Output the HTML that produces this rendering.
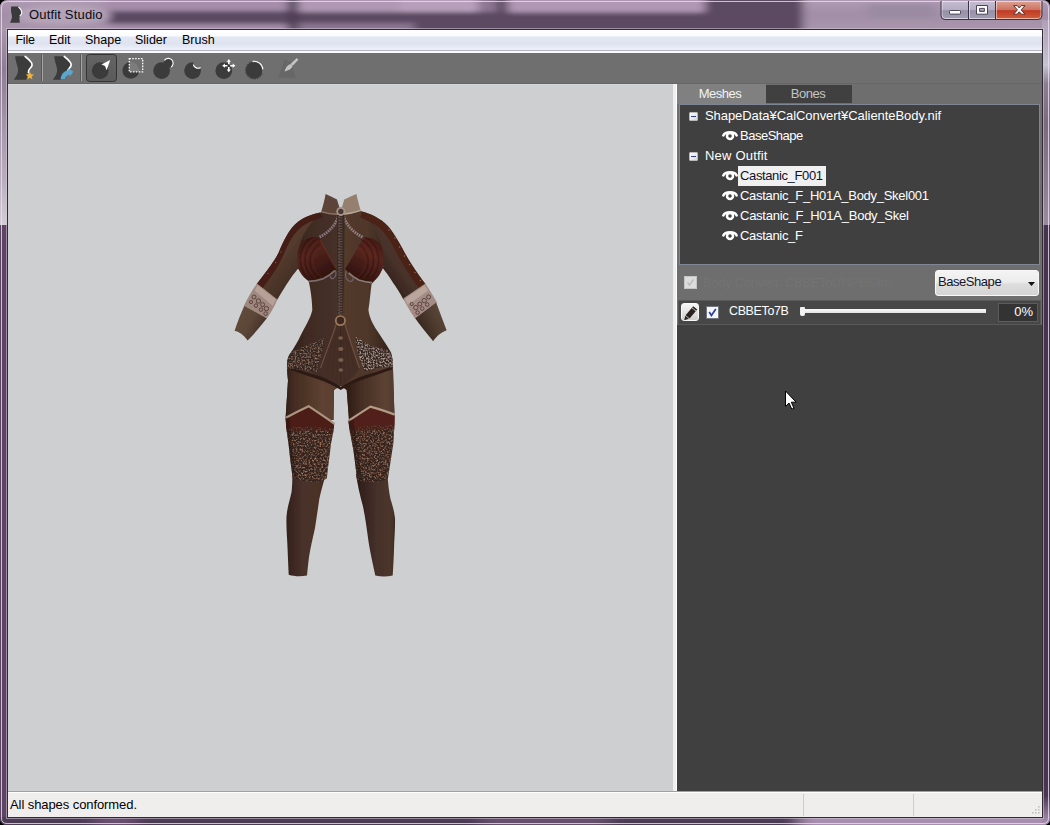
<!DOCTYPE html>
<html><head><meta charset="utf-8">
<style>
*{margin:0;padding:0;box-sizing:border-box}
html,body{width:1050px;height:825px;overflow:hidden;background:#000;font-family:"Liberation Sans",sans-serif;font-size:12px;color:#000}
.abs{position:absolute}
#win{position:absolute;left:0;top:0;width:1050px;height:825px;background:#000;overflow:hidden}
#glass{position:absolute;left:0;top:0;width:1050px;height:825px}
#client{position:absolute;left:8px;top:30px;width:1034px;height:787px;background:#6e6e6e}
#menubar{position:absolute;left:0;top:0;width:1034px;height:20px;background:linear-gradient(#fff 0,#fbfbfe 6px,#e3e7f3 7px,#dfe3f0 14px,#eceff8 19px)}
#menubar span{position:absolute;top:3px;font-size:12.5px;color:#000;white-space:nowrap}
#menuline{position:absolute;left:0;top:20px;width:1034px;height:1px;background:#b4b6c0}
#menuline2{position:absolute;left:0;top:21px;width:1034px;height:2px;background:#fafafa}
#toolbar{position:absolute;left:0;top:23px;width:1034px;height:31px;background:#6f6f6f;box-shadow:inset 0 -1px 0 #666}
#canvas{position:absolute;left:0;top:54px;width:665px;height:707px;background:#cecfd1;box-shadow:inset 0 1px 0 #d5d6d8}
#sash{position:absolute;left:665px;top:54px;width:4px;height:707px;background:linear-gradient(90deg,#ececec 0,#f0f0f0 25%,#f0f0f0 74%,#fff 76%)}
#panel{position:absolute;left:669px;top:54px;width:365px;height:707px;background:#6e6e6e}
#status{position:absolute;left:0;top:761px;width:1034px;height:26px;background:#f0eeed;border-top:1px solid #a0a0a0;box-shadow:inset 0 1px 0 #fff}

#panel .tab{position:absolute;font-size:13px;letter-spacing:-0.5px;text-align:center;white-space:nowrap}
#tree{position:absolute;left:2px;top:20px;width:361px;height:161px;background:#404040;border:1px solid #7f8796}
.trow{position:absolute;left:0;height:20px;line-height:22px;font-size:13px;color:#fff;white-space:nowrap;letter-spacing:-0.3px}
.exp{position:absolute;left:9px;margin-top:-1px;width:9px;height:9px;background:linear-gradient(135deg,#fff,#d8d8d8);border:1px solid #b8b8b8;border-radius:1px}
.exp i{position:absolute;left:1px;top:3px;width:5px;height:1px;background:#2a3ea0}
.eye{position:absolute;left:42px;width:16px;height:12px}
#darkarea{position:absolute;left:0;top:241px;width:365px;height:466px;background:#404040}
#srow{position:absolute;left:1px;top:216px;width:363px;height:25px;background:#474747;border:1px solid #595959}
#combo{position:absolute;left:258px;top:186px;width:104px;height:26px;border-radius:3px;background:linear-gradient(#f4f4f4 0,#ececec 45%,#dddddd 55%,#d4d4d4 100%);border:1px solid #f8f8f8}
</style></head>
<body>
<div id="win">
<svg id="glass" width="1050" height="825" viewBox="0 0 1050 825">
<defs>
<clipPath id="wclip"><path d="M0 8 Q0 0 8 0 H1042 Q1050 0 1050 8 V818 Q1050 825 1043 825 H7 Q0 825 0 818 Z"/></clipPath>
<filter id="b3" x="-5%" y="-50%" width="110%" height="200%"><feGaussianBlur stdDeviation="5 1.9"/></filter>
<filter id="b2" x="-5%" y="-100%" width="110%" height="300%"><feGaussianBlur stdDeviation="9 0.6"/></filter>
<linearGradient id="gL" x1="0" y1="0" x2="0" y2="1"><stop offset="0" stop-color="#a896ac"/><stop offset="0.2" stop-color="#8e7c94"/><stop offset="0.45" stop-color="#a292a6"/><stop offset="0.75" stop-color="#b8acbc"/><stop offset="1" stop-color="#d4ccd8"/></linearGradient>
<linearGradient id="gR" x1="0" y1="0" x2="0" y2="1"><stop offset="0" stop-color="#b0a0b6"/><stop offset="0.12" stop-color="#b8b0c4"/><stop offset="0.22" stop-color="#c4c4d2"/><stop offset="0.31" stop-color="#8c7e92"/><stop offset="0.5" stop-color="#7a6a80"/><stop offset="1" stop-color="#9a8aa0"/></linearGradient>
<linearGradient id="gRB" x1="0" y1="0" x2="0" y2="1"><stop offset="0" stop-color="#46344c"/><stop offset="0.35" stop-color="#4a3850"/><stop offset="0.85" stop-color="#9a82a2"/><stop offset="1" stop-color="#a88fb0"/></linearGradient><linearGradient id="gTl" x1="0" y1="0" x2="0" y2="1"><stop offset="0" stop-color="#b39fb7"/><stop offset="0.45" stop-color="#a28ea6"/><stop offset="1" stop-color="#ab98af"/></linearGradient>
<linearGradient id="gTd" x1="0" y1="0" x2="0" y2="1"><stop offset="0" stop-color="#ac94b0"/><stop offset="0.3" stop-color="#a48ca8"/><stop offset="0.42" stop-color="#634e68"/><stop offset="0.72" stop-color="#5a4660"/><stop offset="0.84" stop-color="#75617b"/><stop offset="1" stop-color="#8e7a94"/></linearGradient>
<linearGradient id="gBtn" x1="0" y1="0" x2="0" y2="1"><stop offset="0" stop-color="#c6bdd0"/><stop offset="0.48" stop-color="#b4acc2"/><stop offset="0.52" stop-color="#9690a8"/><stop offset="1" stop-color="#a49eb4"/></linearGradient>
<linearGradient id="gCl" x1="0" y1="0" x2="0" y2="1"><stop offset="0" stop-color="#dea291"/><stop offset="0.48" stop-color="#cc7260"/><stop offset="0.52" stop-color="#bf3a24"/><stop offset="1" stop-color="#d4603f"/></linearGradient>
</defs>
<rect width="1050" height="825" fill="#000"/>
<g clip-path="url(#wclip)">
 <rect width="1050" height="825" fill="#5a4260"/>
 <!-- title bar -->
 <g filter="url(#b3)">
  <rect x="-10" y="-4" width="125" height="40" fill="url(#gTl)"/>
  <rect x="108" y="-4" width="700" height="40" fill="#5c4862"/>
  <rect x="104" y="-4" width="188" height="15" fill="#a68eaa"/>
  <rect x="104" y="24" width="188" height="10" fill="#a68eaa"/>
  <rect x="298" y="-4" width="200" height="16" fill="#b098b4"/>
  <rect x="400" y="-4" width="78" height="16" fill="#b8a0bc"/>
  <rect x="478" y="-4" width="20" height="16" fill="#8c7692"/>
  <rect x="298" y="23" width="116" height="12" fill="#8a7490"/>
  <rect x="508" y="-4" width="197" height="16.5" fill="#b098b4"/>
  <rect x="288" y="-4" width="10" height="40" fill="#4c3c52"/>
  <rect x="497" y="-4" width="10" height="18" fill="#5a4660"/>
  <rect x="705" y="-4" width="100" height="40" fill="#5c4a62"/>
  <rect x="803" y="-4" width="260" height="40" fill="url(#gTl)"/>
  <rect x="868" y="4" width="66" height="14" fill="#9a8aa2"/>
 </g>
 <ellipse cx="62" cy="15" rx="50" ry="10" fill="#c4b5c7" opacity="0.5" filter="url(#b3)"/>
 <!-- side borders -->
 <rect x="0" y="30" width="8" height="195" fill="url(#gL)"/>
 <rect x="0" y="225" width="8" height="600" fill="#5e4564"/>
 <rect x="1042" y="20" width="8" height="205" fill="url(#gR)"/>
 <rect x="1042" y="225" width="8" height="600" fill="#46344c"/>
 <!-- bottom border -->
 <g filter="url(#b2)">
 <rect x="-5" y="817" width="815" height="12" fill="#4c3a52"/>
 <rect x="95" y="817" width="40" height="12" fill="#6a5070"/>
 <rect x="480" y="817" width="130" height="12" fill="#65506b"/>
 <rect x="800" y="817" width="260" height="12" fill="#a88fb0"/>
 </g>
 <rect x="1042" y="790" width="8" height="30" fill="#46344c"/>
 <rect x="1042" y="780" width="8" height="45" fill="url(#gRB)"/>
 <!-- inner frame lines around client -->
 <rect x="6.5" y="28.5" width="1037" height="790" fill="none" stroke="#d5c8da" stroke-opacity="0.55" stroke-width="1"/>
 <rect x="7.5" y="29.5" width="1035" height="788" fill="none" stroke="#332a36" stroke-width="1"/>
 <!-- outer highlight -->
 <path d="M1.5 8 Q1.5 1.5 8 1.5 H1042 Q1048.5 1.5 1048.5 8 V818 Q1048.5 823.5 1043 823.5 H7 Q1.5 823.5 1.5 818 Z" fill="none" stroke="#eadff0" stroke-opacity="0.8" stroke-width="1"/>
 <!-- caption buttons -->
 <path d="M941 1 H1042 V15.5 Q1042 19.5 1038 19.5 H945 Q941 19.5 941 15.5 Z" fill="url(#gBtn)"/>
 <path d="M995.5 1 H1042 V15.5 Q1042 19.5 1038 19.5 H995.5 Z" fill="url(#gCl)"/>
 <path d="M942 1.5 H1041 V15.5 Q1041 18.5 1038 18.5 H945 Q942 18.5 942 15.5 Z" fill="none" stroke="#fff" stroke-opacity="0.55"/>
 <path d="M941 1 V15.5 Q941 19.5 945 19.5 H1038 Q1042 19.5 1042 15.5 V1" fill="none" stroke="#3a3446" stroke-width="1"/>
 <path d="M968.5 1 V19 M995.5 1 V19" stroke="#3a3446" stroke-width="1"/>
 <path d="M969.5 2 V18 M996.5 2 V18" stroke="#fff" stroke-opacity="0.5" stroke-width="1"/>
 <rect x="949.5" y="10.5" width="11" height="3.6" rx="0.8" fill="#fdfdfd" stroke="#4a4658" stroke-width="1"/>
 <path d="M976.5 5.5 H987.5 V14.2 H976.5 Z M979.6 8.4 V11.4 H984.4 V8.4 Z" fill="#fdfdfd" fill-rule="evenodd" stroke="#4a4658" stroke-width="1"/>
 <path d="M1013.6 5.6 H1017.2 L1019.3 8 L1021.4 5.6 H1025 L1021.2 9.9 L1025 14.2 H1021.4 L1019.3 11.8 L1017.2 14.2 H1013.6 L1017.4 9.9 Z" fill="#fdfdfd" stroke="#5a3030" stroke-width="1" stroke-linejoin="round"/>
</g>
</svg>
<svg class="abs" style="left:8px;top:6px" width="16" height="18" viewBox="0 0 16 18"><path d="M3.2 0.6 H10.6 C12.6 2.6 14 4.4 14 6.4 C14 8.4 12.4 9.4 11.6 10.6 C11.2 11.8 11.6 13.6 11.8 16.8 H2 C3.6 13.6 4.2 11.6 3.8 9.6 C3.4 7.2 2.6 4 3.2 0.6 Z" fill="#3a3a3c"/><path d="M10.4 0.8 C12.4 2.6 13.8 4.4 13.8 6.4 C13.8 8.2 12.6 9 11.8 10" fill="none" stroke="#fff" stroke-width="1.1"/></svg>
<div class="abs" style="left:29px;top:7px;font-size:13px;letter-spacing:0.17px;color:#0a0a14;white-space:nowrap">Outfit Studio</div>
<div id="client">
  <div id="menubar"><span style="left:7.4px;letter-spacing:-0.2px">File</span><span style="left:41px">Edit</span><span style="left:77px">Shape</span><span style="left:127px">Slider</span><span style="left:174px">Brush</span></div>
  <div id="menuline"></div><div id="menuline2"></div>
  <div id="toolbar"><svg class="abs" style="left:0;top:0" width="330" height="31" viewBox="8 53 330 31">
<defs><linearGradient id="selg" x1="0" y1="0" x2="0" y2="1"><stop offset="0" stop-color="#646464"/><stop offset="1" stop-color="#5a5a5a"/></linearGradient></defs>
<path d="M15.2 56.2 H25.1 C27.2 58 29.6 59.8 31.4 62.6 C32.8 64.8 32 66.6 29.9 68.5 C28.6 69.6 28.3 70.6 28.4 72.6 L26.2 79.8 H13.8 C16 76.6 17.4 74.6 17.9 72 C18.5 68.6 17 65.4 16.2 62.2 C15.7 60.2 15.3 58.4 15.2 56.2 Z" fill="#3b3b3b"/><path d="M25.1 56.4 C27.2 58 29.6 59.8 31.4 62.6 C32.8 64.8 32 66.6 29.9 68.5 C28.6 69.6 28.3 70.6 28.4 72.8" fill="none" stroke="#fff" stroke-width="1.6" stroke-linecap="round"/>
<path d="M29.90 71.60 L31.02 74.36 L33.99 74.57 L31.71 76.49 L32.43 79.38 L29.90 77.80 L27.37 79.38 L28.09 76.49 L25.81 74.57 L28.78 74.36 Z" fill="#f1b436"/>
<path d="M41.5 54.5 V81" stroke="#585858" stroke-width="1"/><path d="M42.5 54.5 V81" stroke="#a4a4a4" stroke-width="1"/>
<g transform="translate(39.1 0)"><path d="M15.2 56.2 H25.1 C27.2 58 29.6 59.8 31.4 62.6 C32.8 64.8 32 66.6 29.9 68.5 C28.6 69.6 28.3 70.6 28.4 72.6 L26.2 79.8 H13.8 C16 76.6 17.4 74.6 17.9 72 C18.5 68.6 17 65.4 16.2 62.2 C15.7 60.2 15.3 58.4 15.2 56.2 Z" fill="#3b3b3b"/><path d="M25.1 56.4 C27.2 58 29.6 59.8 31.4 62.6 C32.8 64.8 32 66.6 29.9 68.5 C28.6 69.6 28.3 70.6 28.4 72.8" fill="none" stroke="#fff" stroke-width="1.6" stroke-linecap="round"/></g>
<path d="M60.6 79.6 C60.8 74.6 63.6 71 68.6 70 L68.2 68.6 L73.4 71.6 L70 76.4 L69.6 74.4 C66.8 75 65.4 76.8 65.2 79.6 Z" fill="#5ba6cc"/>
<path d="M80.5 54.5 V81" stroke="#585858" stroke-width="1"/><path d="M81.5 54.5 V81" stroke="#a4a4a4" stroke-width="1"/>
<rect x="86.5" y="54.5" width="30" height="27" rx="3" fill="url(#selg)" stroke="#333" stroke-width="1"/>
<circle cx="100.2" cy="70.6" r="8.4" fill="#3b3b3b"/>
<path d="M110.2 60 L101.4 64.6 L105 66 L106.6 70.2 Z" fill="#fff"/>
<circle cx="130.8" cy="70.4" r="8.4" fill="#3b3b3b"/>
<path d="M129.4 58.6 H142.6 V71.8 H129.4 Z" fill="none"/>
<path d="M129.4 71.8 V61.6 A9 9 0 0 1 139.2 71.8 Z" fill="#7c7c7c"/>
<rect x="129.3" y="58.7" width="13.4" height="13.2" fill="none" stroke="#fff" stroke-width="1.3" stroke-dasharray="1.6 1.3"/>
<circle cx="161.6" cy="70.6" r="8.4" fill="#3b3b3b"/><circle cx="168.2" cy="63.2" r="4.6" fill="#3b3b3b"/>
<path d="M164.4 60.4 A4.8 4.8 0 1 1 171.2 67" fill="none" stroke="#fff" stroke-width="1.1"/>
<circle cx="192.6" cy="70.6" r="8.4" fill="#3b3b3b"/><circle cx="198" cy="63.4" r="4.8" fill="#6e6e6e"/>
<path d="M193.3 64.6 A4.8 4.8 0 0 0 200.6 67.4" fill="none" stroke="#fff" stroke-width="1.2"/>
<circle cx="223.8" cy="70.6" r="8.4" fill="#3b3b3b"/>
<g fill="#fff" transform="translate(228.8 65.7)"><path d="M0 -6.6 L2.1 -3.9 H0.8 V-1.4 H-0.8 V-3.9 H-2.1 Z"/><path d="M0 6.6 L2.1 3.9 H0.8 V1.4 H-0.8 V3.9 H-2.1 Z"/><path d="M-6.6 0 L-3.9 -2.1 V-0.8 H-1.4 V0.8 H-3.9 V2.1 Z"/><path d="M6.6 0 L3.9 -2.1 V-0.8 H1.4 V0.8 H3.9 V2.1 Z"/></g>
<path d="M262.20 70.20 L262.14 71.16 L261.97 72.11 L261.68 73.04 L262.70 74.66 L260.78 74.74 L261.39 76.57 L259.50 76.19 L259.65 78.10 L257.92 77.28 L257.60 79.18 L256.11 77.97 L255.36 79.73 L254.20 78.20 L253.04 79.73 L252.29 77.97 L250.80 79.18 L250.48 77.28 L248.75 78.10 L248.90 76.19 L247.01 76.57 L247.62 74.74 L245.70 74.66 L246.72 73.04 L244.88 72.50 L246.26 71.16 L244.60 70.20 L246.26 69.24 L244.88 67.90 L246.72 67.36 L245.70 65.74 L247.62 65.66 L247.01 63.83 L248.90 64.21 L248.75 62.30 L250.48 63.12 L250.80 61.22 L252.29 62.43 L253.24 62.26 L254.20 62.20 L255.16 62.26 L256.11 62.43 L257.04 62.72 L257.92 63.12 L258.74 63.62 L259.50 64.21 L260.19 64.90 L260.78 65.66 L261.28 66.48 L261.68 67.36 L261.97 68.29 L262.14 69.24 Z" fill="#3b3b3b"/>
<path d="M252.6 61.4 A8.8 8.8 0 0 1 262.9 69.4" fill="none" stroke="#fff" stroke-width="1.1"/>
<path d="M284.6 60.4 L278.2 77.8 H296 L290.4 62 Z" fill="#676767"/><circle cx="285.4" cy="61.6" r="1.8" fill="#666"/>
<path d="M296.8 58 L298.4 59.8 L292.6 65.8 L290.6 64 Z" fill="#c6c6c6"/>
<path d="M290.4 64 L292.6 66 C291.6 68.8 288.6 70.6 284.6 71.4 C285.4 68.2 287 65.4 290.4 64 Z" fill="#c2c2c2"/>
</svg></div>
  <div id="canvas"><!--FIG--><svg class="abs" style="left:0;top:0" width="665" height="707" viewBox="8 84 665 707">
<defs>
<linearGradient id="gTorso" gradientUnits="userSpaceOnUse" x1="296" y1="0" x2="386" y2="0"><stop offset="0" stop-color="#36241c"/><stop offset="0.15" stop-color="#402c22"/><stop offset="0.46" stop-color="#46302a"/><stop offset="0.55" stop-color="#523a2c"/><stop offset="0.8" stop-color="#4e372a"/><stop offset="1" stop-color="#38261d"/></linearGradient>
<linearGradient id="gLegL" gradientUnits="userSpaceOnUse" x1="285" y1="0" x2="335" y2="0"><stop offset="0" stop-color="#2f1d15"/><stop offset="0.15" stop-color="#432b20"/><stop offset="0.75" stop-color="#5e4231"/><stop offset="1" stop-color="#5a3e2f"/></linearGradient>
<linearGradient id="gLegR" gradientUnits="userSpaceOnUse" x1="345" y1="0" x2="396" y2="0"><stop offset="0" stop-color="#2a1913"/><stop offset="0.3" stop-color="#452d22"/><stop offset="0.8" stop-color="#5c4333"/><stop offset="1" stop-color="#4e392c"/></linearGradient>
<linearGradient id="gCalfL" gradientUnits="userSpaceOnUse" x1="286" y1="0" x2="326" y2="0"><stop offset="0" stop-color="#33201a"/><stop offset="0.4" stop-color="#48302a"/><stop offset="0.8" stop-color="#4c3227"/><stop offset="1" stop-color="#3a241c"/></linearGradient>
<linearGradient id="gCalfR" gradientUnits="userSpaceOnUse" x1="356" y1="0" x2="396" y2="0"><stop offset="0" stop-color="#2c1b15"/><stop offset="0.5" stop-color="#45302a"/><stop offset="0.85" stop-color="#4d362b"/><stop offset="1" stop-color="#3c2920"/></linearGradient>
<linearGradient id="gArmL" gradientUnits="userSpaceOnUse" x1="266" y1="258" x2="292" y2="278"><stop offset="0" stop-color="#4a2a20"/><stop offset="0.3" stop-color="#553c2f"/><stop offset="0.7" stop-color="#4c3529"/><stop offset="1" stop-color="#432e24"/></linearGradient>
<linearGradient id="gArmR" gradientUnits="userSpaceOnUse" x1="388" y1="282" x2="416" y2="262"><stop offset="0" stop-color="#33221b"/><stop offset="0.5" stop-color="#48322a"/><stop offset="0.85" stop-color="#4e3529"/><stop offset="1" stop-color="#5a2a1e"/></linearGradient>
<linearGradient id="gForeL" gradientUnits="userSpaceOnUse" x1="240" y1="318" x2="262" y2="330"><stop offset="0" stop-color="#5f4a3a"/><stop offset="0.5" stop-color="#5a4536"/><stop offset="1" stop-color="#43302a"/></linearGradient>
<linearGradient id="gForeR" gradientUnits="userSpaceOnUse" x1="418" y1="330" x2="444" y2="316"><stop offset="0" stop-color="#33241d"/><stop offset="0.5" stop-color="#4a382c"/><stop offset="1" stop-color="#5c4838"/></linearGradient>
<linearGradient id="gBraL" gradientUnits="userSpaceOnUse" x1="300" y1="240" x2="325" y2="282"><stop offset="0" stop-color="#43191300"/><stop offset="0" stop-color="#3a1712"/><stop offset="0.35" stop-color="#52241c"/><stop offset="0.7" stop-color="#3c1914"/><stop offset="1" stop-color="#2c100c"/></linearGradient>
<linearGradient id="gBraR" gradientUnits="userSpaceOnUse" x1="380" y1="240" x2="356" y2="282"><stop offset="0" stop-color="#401914"/><stop offset="0.35" stop-color="#58261e"/><stop offset="0.7" stop-color="#3f1a15"/><stop offset="1" stop-color="#2c100c"/></linearGradient>
<filter id="chain" x="0" y="0" width="100%" height="100%" color-interpolation-filters="sRGB"><feTurbulence type="fractalNoise" baseFrequency="0.55" numOctaves="2" seed="7" result="n"/><feColorMatrix in="n" type="matrix" values="0 0 0 0 0.68  0 0 0 0 0.49  0 0 0 0 0.40  2.6 0 0 0 -1.15"/><feGaussianBlur stdDeviation="0.35"/><feComposite in2="SourceGraphic" operator="in"/></filter>
<filter id="chain2" x="0" y="0" width="100%" height="100%" color-interpolation-filters="sRGB"><feTurbulence type="fractalNoise" baseFrequency="0.6" numOctaves="2" seed="3" result="n"/><feColorMatrix in="n" type="matrix" values="0 0 0 0 0.72  0 0 0 0 0.64  0 0 0 0 0.60  2.8 0 0 0 -1.1"/><feGaussianBlur stdDeviation="0.35"/><feComposite in2="SourceGraphic" operator="in"/></filter><filter id="chain2d" x="0" y="0" width="100%" height="100%" color-interpolation-filters="sRGB"><feTurbulence type="fractalNoise" baseFrequency="0.6" numOctaves="2" seed="11" result="n"/><feColorMatrix in="n" type="matrix" values="0 0 0 0 0.56  0 0 0 0 0.43  0 0 0 0 0.37  2.8 0 0 0 -1.15"/><feGaussianBlur stdDeviation="0.35"/><feComposite in2="SourceGraphic" operator="in"/></filter>
<filter id="soft"><feGaussianBlur stdDeviation="0.5"/></filter>
<filter id="soft2"><feGaussianBlur stdDeviation="1.2"/></filter>
</defs>
<g filter="url(#soft)">
<!-- forearms -->
<path d="M245.4 303.6 C241 313 237.6 322 234.6 330.8 C238.6 331.6 244 335 247.6 340.6 C254 334 261 326 267.4 317.6 Z" fill="url(#gForeL)"/>
<path d="M414.6 317.6 C420.6 326 427 334 433.2 341.2 C436 336.6 441 332.4 446.6 330.2 C443 321 439.6 311.6 436 302 Z" fill="url(#gForeR)"/>
<!-- torso + thighs -->
<path d="M322 212 L360 211 C368 214 376 218 382 226 L388 250 L382.9 268.3 C380 274 376 280 371.6 284 C370.4 292 370 300 368.4 310 C369.4 318 373.6 326 379 333.4 C383 340 387.6 346 391 352.4 C392.4 356 393 362 393.3 380 L394.5 416 L349 420 L346.7 390 L340.6 386 L334 390 L333.5 420 L285.6 418 L288 380.6 C287 370 287 364 287.4 360 C288 356 289.6 354 291 352.4 C295 346.6 298 341 300.6 335.5 C305 327 310.6 318 312.3 310 C312 300 311 292 308.6 280.5 C304 276 300 272 297.7 268.3 L292 250 L300 226 Z" fill="url(#gTorso)"/>
<!-- left arm upper -->
<path d="M322 212 C314 214 308 216 304 218 C298 221 294 225 291 229 C286 236 283 242 279 252 C275 260 270 267 257 284 L277 300 C283 290 290 278 298.5 268 C297 258 298 246 303 236 C308 226 315 218 322 212 Z" fill="url(#gArmL)"/>
<path d="M320 212.4 C312 214 306 216.6 302 219 C296 222.6 292.6 226.6 289.6 231 C285 238 282 244 278.4 253 C274.4 261 269 268 256.6 284 L262.4 288.4 C273 274.4 278 266.6 282.6 257 C286.4 248 289 242 293.4 235.4 C297 230.4 301.6 226.2 307 223.4 C311 221.2 316.4 219 322.4 217.4 Z" fill="#421b14" opacity="0.9"/>
<!-- right arm upper -->
<path d="M360 211 C368 213 373 215.4 377 217.7 C383 221 387 225 389.5 228 C394 234 397.6 240 400.5 245.3 C404 252 408 259 412.6 266 C416 271 420 277 425.3 284 L403.5 299.8 C400 293 396 287 393.2 283 C390 278 386 272 382.9 268.3 C384.4 258 383.4 246 378.4 236 C374 227 367 218 360 211 Z" fill="url(#gArmR)"/>
<path d="M362 211.6 C369 213.4 374 215.8 378 218.2 C384 221.6 387.6 225.4 390 228.4 C394.6 234.4 398 240.4 401 245.8 C404.4 252.4 408.4 259.4 413 266.4 C416.4 271.4 420.4 277.4 425.6 284.2 L419.4 288.8 C414.8 282.4 410.8 276.6 407.4 271.4 C402.8 264.4 399.2 257.8 395.8 251.4 C392.8 245.8 389.6 240 385.4 234.6 C382.6 231 379.4 227.6 374.6 224.6 C370.6 222.2 366 219.8 360.4 217.6 Z" fill="#4c1f16" opacity="0.92"/>
<!-- thigh overlays -->
<path d="M287.4 360 C287 366 287 372 288 380.6 L285.6 418 L333.5 420 L334 390 L338 386.6 L310 372 Z" fill="url(#gLegL)"/>
<path d="M392.8 360 C393 366 393.2 372 393.3 380 L394.5 416 L349 420 L346.7 390 L342.6 386.6 L370 372 Z" fill="url(#gLegR)"/>
<!-- lower legs -->
<path d="M292.4 474 C292.4 482 292 488 291.6 491.8 C290 500 287 508 286.5 516.5 C286.2 526 286.8 534 287.3 542.7 C287.8 554 288.2 564 288.7 574.7 C294 576.4 301 576.6 307 575.5 C307.6 569 308.2 563 309 557 C310.6 547 313 537 315 528 C316.6 518 318 508 319.3 499 C321 491 323 484 325.4 476 Z" fill="url(#gCalfL)"/>
<path d="M356 474 C357.4 484 360 496 363 506.4 C365.4 518 367 530 368.7 542.7 C370.6 554 373 565 375.3 575.5 C381 576.8 387 576.8 392.7 575.5 C393.4 564 394 553 394.2 542.7 C394.8 534 395.2 526 395 518 C394 510 392 504 390.5 499 C389 492 388 484 387.6 474 Z" fill="url(#gCalfR)"/>
</g>
<!-- bra cups -->
<g filter="url(#soft)">
<path d="M319.4 237.8 C312 235.6 302 238.6 298.6 249 C296.4 258 297.2 268 301.6 274.6 C304 278 307 280.4 310 281.6 C315 280.6 320 279.6 323.4 278.6 C328 276 332 273 336.8 269.4 C332 262 326 250.6 320 238.6 L319.4 237.8 Z" fill="url(#gBraL)"/>
<path d="M363 237.8 C370 236.2 379.4 239.4 382.4 249 C384.6 258 383.6 268 379.4 275 C377 278.6 374 281 371 282.4 C366.6 281.6 362.6 280.8 358.7 280 C355 277.6 351.6 275.4 348.4 272.6 L345.3 268.6 C350 261 357 250 363 238.6 L363 237.8 Z" fill="url(#gBraR)"/>
<g fill="none" stroke="#7e3024" stroke-width="0.9" opacity="0.35">
<path d="M316 238 C306 242 300.6 254 303.6 266 C304.6 270 306.4 273 309 276"/>
<path d="M319 240 C310 246 305 256 308 267 C309.4 271 312 274.6 315 277.6"/>
<path d="M320.4 248 C314 252 311 259 314 268 C315.4 271.6 318.6 275 322 277.4"/>
<path d="M320.4 240 C326 251 331.6 261.6 336 268.6" stroke="#9a3c2e" stroke-width="1.1"/>
<path d="M362.4 238.4 C372.4 242 378 254 375.4 266 C374.4 270 372.4 273.6 370 276.6"/>
<path d="M359.4 241 C368 246 373 256 370 267 C368.8 271 366.4 275 363 278.4"/>
<path d="M357.8 248 C364 252 367 259 364.4 268 C363 272 360 275.6 356.6 278"/>
</g>
<g fill="none" stroke="#2a0e0a" stroke-width="1.1" opacity="0.45">
<path d="M313 237.8 C303 241 298.6 254 301 266 C302 270 303.6 273 306 276.6"/>
<path d="M317.6 239 C308 244 302.8 255 305.8 266.6 C307 270.6 309.4 274 312 277"/>
<path d="M320 244 C312 249 308 258 311 267.6 C312.4 271.4 315.4 275 318.6 277.6"/>
<path d="M365.4 237.8 C375.4 241 380.4 254 378 266 C377 270 375.4 273.6 373 277"/>
<path d="M360.8 239.6 C370.4 244 375.6 255 372.6 266.6 C371.6 270.6 369.4 274.6 366.4 277.8"/>
<path d="M358.6 244.6 C366 249 370 258 367.2 267.6 C365.8 271.6 363 275.4 359.8 278.2"/>
</g>
</g>
<!-- under-bra trim -->
<path d="M308.6 281.4 C314 281.2 319 280.2 323.4 278.6 C328 276.4 332 273.4 335 270.4" fill="none" stroke="#7c6c6c" stroke-width="1.7"/>
<path d="M372 282.6 C367 282.2 362.6 281.2 358.7 280 C355 278 351.6 275.6 348.6 272.8" fill="none" stroke="#8a7a78" stroke-width="1.7"/>
<path d="M335 270.4 C337 273 336 277 333 278.6 C331 279 330 277.6 331 276 M346.4 271 C344.6 275 345.6 279 349 281 C352 282 354 280 353 277.6" fill="none" stroke="#6c6070" stroke-width="1.3"/>
<!-- neck chains -->
<path d="M338.4 216 C336 224 330 232 319 237.4" fill="none" stroke="#94808a" stroke-width="2.8" stroke-dasharray="1.6 0.9" opacity="0.9"/>
<path d="M343.6 216 C346 224 352 232 363.4 237.6" fill="none" stroke="#9a868e" stroke-width="2.8" stroke-dasharray="1.6 0.9" opacity="0.9"/>
<!-- center strap -->
<path d="M337 214 L344.6 214 L343.8 290 L342.4 318 L338.6 318 L337.2 290 Z" fill="#3a2a24"/>
<path d="M340.8 215 V317" stroke="#a08c82" stroke-width="3" stroke-dasharray="1 1.6" opacity="0.42"/>
<path d="M339 216 V317" stroke="#6a5850" stroke-width="1.2" stroke-dasharray="2 1.2"/>
<!-- collar -->
<path d="M325.6 194 C329 195.6 333 197.6 337 199.4 C338 203 339 206 340 209 L339 214.6 C333 215 327 214 321 212.4 C323 206 324.6 200 325.6 194 Z" fill="#5c4438"/>
<path d="M356.4 194 C352 195.6 348 197.6 344.2 199.6 C343.4 203 342.4 206 341.4 209 L342.4 214.6 C348.4 214.6 354.6 213 360.8 211 C359 205 357.6 199.6 356.4 194 Z" fill="#95806f"/>
<path d="M321.4 211.6 C327 213.4 333 214.4 339 214.2" stroke="#8a7468" stroke-width="1.4" fill="none"/>
<path d="M342.4 214.2 C348.4 214 354.6 212.6 360.6 210.4" stroke="#b8a698" stroke-width="1.4" fill="none"/>
<circle cx="340.8" cy="211.4" r="3.6" fill="#4a3a34" stroke="#a8948a" stroke-width="1.8"/>
<!-- cuffs -->
<path d="M257 283.6 L277.4 299.4 C274.6 306 271 312.4 266.8 318.4 L244.4 306 L243 308 C247 299 251.6 291 257 283.6 Z" fill="#a0887f"/>
<path d="M425.3 283.6 L403.2 298.6 C406.6 305.6 410.6 312.4 415 318.4 L436.2 302.4 L437.6 303.6 C433.6 296.6 429.6 290 425.3 283.6 Z" fill="#a48c84"/>
<path d="M257.6 285.2 L276 299.6 C275 302 274 304 273 306 L254.6 290.4 Z" fill="#b8a49c" opacity="0.9"/>
<path d="M424.8 285.2 L404.8 298.8 C405.8 301 406.8 303 407.8 305 L428 290.8 Z" fill="#bca8a0" opacity="0.9"/>
<g fill="none" stroke="#3e2a26" stroke-width="0.9" opacity="0.8">
<circle cx="254" cy="297" r="2"/><circle cx="258.4" cy="301" r="2.2"/><circle cx="262.6" cy="304.6" r="2"/><circle cx="266.4" cy="308.6" r="2.2"/><circle cx="256" cy="305.6" r="1.8"/><circle cx="261" cy="309.6" r="1.8"/><circle cx="265.6" cy="313.6" r="1.8"/><circle cx="251" cy="302" r="1.6"/>
<circle cx="428.6" cy="297" r="2"/><circle cx="424.2" cy="300.6" r="2.2"/><circle cx="419.8" cy="304" r="2"/><circle cx="415.8" cy="307.6" r="2.2"/><circle cx="427.2" cy="304.6" r="1.8"/><circle cx="422.2" cy="308.6" r="1.8"/><circle cx="417.6" cy="312.6" r="1.8"/><circle cx="411.6" cy="304" r="1.6"/>
</g>
<!-- arm stripe dots -->
<g fill="#b08070" opacity="0.8"><circle cx="395" cy="238" r="0.7"/><circle cx="399.6" cy="247" r="0.7"/><circle cx="404.4" cy="256" r="0.7"/><circle cx="409.6" cy="264.6" r="0.7"/><circle cx="415" cy="272.6" r="0.7"/><circle cx="420.4" cy="280.4" r="0.7"/><circle cx="389" cy="230" r="0.7"/>
<circle cx="281" cy="252" r="0.6"/><circle cx="275.6" cy="262.6" r="0.6"/><circle cx="268" cy="273.6" r="0.6"/></g>
<!-- center lower panel -->
<path d="M336.6 323 L344.6 323 C349 338 354 352 359.4 368 C355 376 349 382 340.8 386.4 C332 382 325.6 376 320.6 368 C326 352 332 338 336.6 323 Z" fill="#452e25"/>
<g stroke="#3e2a20" stroke-width="0.6" opacity="0.7"><path d="M333 340 L327 372"/><path d="M336 334 L332 378"/><path d="M345.6 334 L349.6 378"/><path d="M348.4 340 L354.4 372"/><path d="M338.6 330 L337 382"/><path d="M343 330 L344.6 382"/></g>
<path d="M336.6 323 C332 338 326 352 320.6 368" stroke="#6c5040" stroke-width="1.2" fill="none"/>
<path d="M344.6 323 C349 338 354 352 359.4 368" stroke="#6c5040" stroke-width="1.2" fill="none"/>
<path d="M340.6 326 V384" stroke="#3a281f" stroke-width="1"/>
<g fill="#7a5c4a"><ellipse cx="340.6" cy="338" rx="2.4" ry="1.8"/><ellipse cx="340.8" cy="349" rx="2.6" ry="1.9"/><ellipse cx="340.8" cy="360" rx="2.6" ry="1.9"/><ellipse cx="340.8" cy="370" rx="2.2" ry="1.8"/></g>
<!-- panty lower dark edge -->
<path d="M289 366 C300 370 312 374 322 377 C330 380 336 384 340.8 387 C346 384 352 380 360 377 C370 374 382 370 392.4 366 L392 369.4 C381 373.4 371 376.6 361.6 380 C353 383 347 386.4 340.8 390 C334.6 386.4 328.6 383 320 380 C310.6 376.6 300 373.4 289 369.4 Z" fill="#2e1a14"/>
<!-- hip chainmail -->
<path id="hipL" d="M291.6 351.4 C294 350 296 349.4 297.4 348.8 C306 346 316 342 324 338 C323.4 346 321.6 356 319.6 361 C318.6 365 317.6 369 316.8 372.4 C311 371.6 305 370.4 301.5 369.6 C296 369.4 291 369.2 287 368.8 C286.8 364 287.4 360 289 356.4 C289.8 354.4 290.6 352.8 291.6 351.4 Z" fill="#32241f"/>
<path id="hipR" d="M355 336 C360 339.6 366 343 371 345.5 C377 347.6 383 349 387 349.8 C390 352 392 356 392.9 360.8 C393 363 392.8 365 392.4 367.2 C388 367.2 384 367.2 379.7 367.4 C375 368.4 370 369.8 365 371 C363.4 367 361.6 364 360 360.8 C357.6 353 355.8 344 355 336 Z" fill="#32241f"/>
<use href="#hipL" filter="url(#chain2d)"/><use href="#hipR" filter="url(#chain2)"/>
<!-- ring -->
<circle cx="340.4" cy="320.6" r="4.6" fill="#3a2822" stroke="#a07a58" stroke-width="1.7"/>
<!-- stockings -->
<path id="stL" d="M285.6 417.6 C293 413.6 301 409.6 308.6 406 C317 411.6 326 417.6 334.2 423.4 C333.6 430 332.4 437 331 443.5 C329.6 456 328 467 326.8 478.6 C321 481.4 315 482.4 310 481.8 C304 481.6 298 480 292.6 477.4 C291 466 289.6 455 288.5 443.5 C287 434 286 425 285.6 417.6 Z" fill="#33231d"/>
<path id="stR" d="M348.4 420.6 C355.6 416 363 411 370.4 406.4 C378.6 408.6 386.6 411.4 394.6 414.4 C394.6 424 394 434 393.3 443.5 C391.6 455 389.6 467 387.9 478.6 C383 481 377.6 482.2 372 482 C366.6 482 361.6 481.4 357 479.8 C356 469 354.6 459 353.3 449.5 C351.4 440 349.6 430 348.4 420.6 Z" fill="#33231d"/>
<use href="#stL" filter="url(#chain)"/><use href="#stR" filter="url(#chain)"/>
<!-- red bands -->
<path d="M285.6 417.6 C293 413.6 301 409.6 308.6 406 C317 411.6 326 417.6 334.2 423.4 L333.8 428.6 C326 427.6 318 426.6 310 426.6 C302 426.6 294 427.4 286.2 428.6 Z" fill="#4c1c16"/>
<path d="M348.4 420.6 C355.6 416 363 411 370.4 406.4 C378.6 408.6 386.6 411.4 394.6 414.4 L394.5 425.6 C387 425.4 379 425.4 371 426 C363.6 426.6 356 427.4 349.2 428.6 Z" fill="#52201a"/>
<path d="M286.4 428.4 C294 427.2 302 426.4 310 426.4 C318 426.4 326 427.4 333.8 428.4 L333.4 433 C326 431 318 430.4 310 430.4 C302 430.4 294 431.4 286.8 433 Z" fill="#4c1c16" opacity="0.55"/>
<path d="M349.2 428.4 C356 427.2 363.6 426.4 371 425.8 C379 425.2 387 425.2 394.5 425.4 L394.2 430 C387 429.6 379 429.6 371 430.2 C363.6 430.8 356.6 431.8 349.8 433 Z" fill="#52201a" opacity="0.55"/>
<!-- trims -->
<path d="M285.4 418 C293 413.8 301 409.8 308.6 406.2 C317 411.8 326 417.8 334.4 423.8" fill="none" stroke="#ab957f" stroke-width="2.2" stroke-linejoin="round"/>
<path d="M348.2 421 C355.6 416.2 363 411.2 370.4 406.6 C378.6 408.8 386.6 411.6 394.8 414.6" fill="none" stroke="#b19b85" stroke-width="2.2" stroke-linejoin="round"/>
<!-- edge shading on stockings -->
<path d="M285.6 417.6 C286 425 287 434 288.5 443.5 C289.6 455 291 466 292.6 477.4 L296.6 479 C295 467 293.6 456 292.5 444 C291 435 290 426 289.6 418 Z" fill="#1e120e" opacity="0.45"/>
<path d="M348.4 420.6 C349.6 430 351.4 440 353.3 449.5 C354.6 459 356 469 357 479.8 L362 481 C361 470 359.6 460 358.3 450 C356.4 440 354.6 430 353.4 420 Z" fill="#1e120e" opacity="0.45"/>
</svg>
<!--/FIG--></div>
  <div id="sash"></div>
  <div id="panel">
    <div class="tab" style="left:0;top:0;width:89px;height:20px;padding-right:3px;background:#808080;color:#f2f2f2;line-height:19px">Meshes</div>
    <div class="tab" style="left:89px;top:1px;width:86px;height:18px;padding-right:2px;background:#404040;color:#c4c4c4;line-height:17px">Bones</div>
    <div id="tree">
      <div class="exp" style="top:8px"><i></i></div>
      <div class="trow" style="top:0;left:25px;letter-spacing:-0.06px">ShapeData&yen;CalConvert&yen;CalienteBody.nif</div>
      <svg class="eye" style="top:24px" viewBox="0 0 16 12"><path d="M1.4 6.4 C3 2.2 13 2.2 14.6 6.4" stroke="#fff" stroke-width="2.6" stroke-linecap="round" fill="none"/><circle cx="8" cy="7.1" r="3" fill="#404040" stroke="#fff" stroke-width="2.5"/></svg><div class="trow" style="top:20px;left:60px;letter-spacing:-0.49px">BaseShape</div>
      <div class="exp" style="top:48px"><i></i></div>
      <div class="trow" style="top:40px;left:25px;letter-spacing:0.2px">New Outfit</div>
      <div class="abs" style="left:58px;top:61px;width:88px;height:20px;background:#f0f0f0"></div>
      <svg class="eye" style="top:64px" viewBox="0 0 16 12"><path d="M1.4 6.4 C3 2.2 13 2.2 14.6 6.4" stroke="#fff" stroke-width="2.6" stroke-linecap="round" fill="none"/><circle cx="8" cy="7.1" r="3" fill="#404040" stroke="#fff" stroke-width="2.5"/></svg><div class="trow" style="top:60px;left:60px;color:#10102a;letter-spacing:-0.37px">Castanic_F001</div>
      <svg class="eye" style="top:84px" viewBox="0 0 16 12"><path d="M1.4 6.4 C3 2.2 13 2.2 14.6 6.4" stroke="#fff" stroke-width="2.6" stroke-linecap="round" fill="none"/><circle cx="8" cy="7.1" r="3" fill="#404040" stroke="#fff" stroke-width="2.5"/></svg><div class="trow" style="top:80px;left:60px;letter-spacing:-0.28px">Castanic_F_H01A_Body_Skel001</div>
      <svg class="eye" style="top:104px" viewBox="0 0 16 12"><path d="M1.4 6.4 C3 2.2 13 2.2 14.6 6.4" stroke="#fff" stroke-width="2.6" stroke-linecap="round" fill="none"/><circle cx="8" cy="7.1" r="3" fill="#404040" stroke="#fff" stroke-width="2.5"/></svg><div class="trow" style="top:100px;left:60px;letter-spacing:-0.25px">Castanic_F_H01A_Body_Skel</div>
      <svg class="eye" style="top:124px" viewBox="0 0 16 12"><path d="M1.4 6.4 C3 2.2 13 2.2 14.6 6.4" stroke="#fff" stroke-width="2.6" stroke-linecap="round" fill="none"/><circle cx="8" cy="7.1" r="3" fill="#404040" stroke="#fff" stroke-width="2.5"/></svg><div class="trow" style="top:120px;left:60px;letter-spacing:-0.31px">Castanic_F</div>
    </div>
    <div class="abs" style="left:7px;top:192px;width:13px;height:13px;background:#dcdcdc;border:1px solid #c4c4c4"><svg width="11" height="11" viewBox="0 0 11 11" class="abs" style="left:0;top:0"><path d="M2.5 5.5 L4.5 8 L8.5 2.5" stroke="#bcbcbc" stroke-width="1.4" fill="none"/></svg></div>
    <div class="abs" style="left:26px;top:191px;font-size:13px;color:#737373;white-space:nowrap;letter-spacing:-0.3px">Body Convert: CBBEToUNPBSlim</div>
    <div id="combo"><span class="abs" style="left:2px;top:3px;font-size:13px;color:#15152a;letter-spacing:-0.45px">BaseShape</span><svg class="abs" style="left:92px;top:11px" width="7" height="4" viewBox="0 0 7 4"><path d="M0 0 H7 L3.5 4 Z" fill="#111"/></svg></div>
    <div id="srow">
      <div class="abs" style="left:2px;top:2px;width:18px;height:18px;border-radius:3px;background:linear-gradient(#f6f6f6,#e4e4e4 50%,#cfcfcf);border:1px solid #f8f8f8"><svg class="abs" style="left:1px;top:1px" width="16" height="16" viewBox="0 0 16 16"><path d="M10.2 1.2 L14.2 4.4 L6.6 13.4 L2.6 10.2 Z" fill="#2a2220"/><path d="M2.3 10.8 L5.8 13.7 L1.2 15.2 Z" fill="#2a2220"/><path d="M9 2.8 L13 6" stroke="#e8e8e8" stroke-width="0.8"/></svg></div>
      <div class="abs" style="left:27px;top:5px;width:13px;height:13px;background:#f4f6fa;border:1px solid #70747c"><svg width="11" height="11" viewBox="0 0 11 11" class="abs" style="left:0;top:0"><path d="M2.2 5 L4.4 8.4 L8.8 2" stroke="#2a3ca0" stroke-width="1.7" fill="none"/></svg></div>
      <div class="abs" style="left:50px;top:2px;font-size:12.4px;letter-spacing:-0.3px;color:#fff;white-space:nowrap;line-height:16px">CBBETo7B</div>
      <div class="abs" style="left:123px;top:8px;width:184px;height:4px;background:linear-gradient(#fafafa,#e4e4e4)"></div>
      <div class="abs" style="left:121px;top:6px;width:4.5px;height:8.5px;background:#f2f2f2;border-radius:1px 1px 2px 2px"></div>
      <div class="abs" style="left:319px;top:2px;width:40px;height:19px;background:#333;border:1px solid #5c5c5c"><span class="abs" style="right:4px;top:0px;font-size:13px;color:#fff;line-height:16px">0%</span></div>
    </div>
    <div id="darkarea"></div>
  </div>
  <div id="status"><span class="abs" style="left:2px;top:5px;font-size:13px;letter-spacing:-0.08px;white-space:nowrap">All shapes conformed.</span><i class="abs" style="left:795px;top:2px;width:1px;height:22px;background:#cfcdcc"></i><i class="abs" style="left:905px;top:2px;width:1px;height:22px;background:#cfcdcc"></i><svg class="abs" style="left:1022px;top:13px" width="11" height="11" viewBox="0 0 11 11"><g fill="#c6c2c2"><rect x="8" y="1" width="1.6" height="1.6"/><rect x="5" y="4" width="1.6" height="1.6"/><rect x="8" y="4" width="1.6" height="1.6"/><rect x="2" y="7" width="1.6" height="1.6"/><rect x="5" y="7" width="1.6" height="1.6"/><rect x="8" y="7" width="1.6" height="1.6"/></g></svg></div>
</div>
<svg class="abs" style="left:782px;top:387px" width="18" height="26" viewBox="782 387 18 26"><path d="M785.5 391 V406.4 L789 403 L791.8 409.2 L794 408.2 L791.3 402.2 H796.2 Z" fill="#fff" stroke="#000" stroke-width="1" stroke-linejoin="miter"/></svg>
</div>
</body></html>
